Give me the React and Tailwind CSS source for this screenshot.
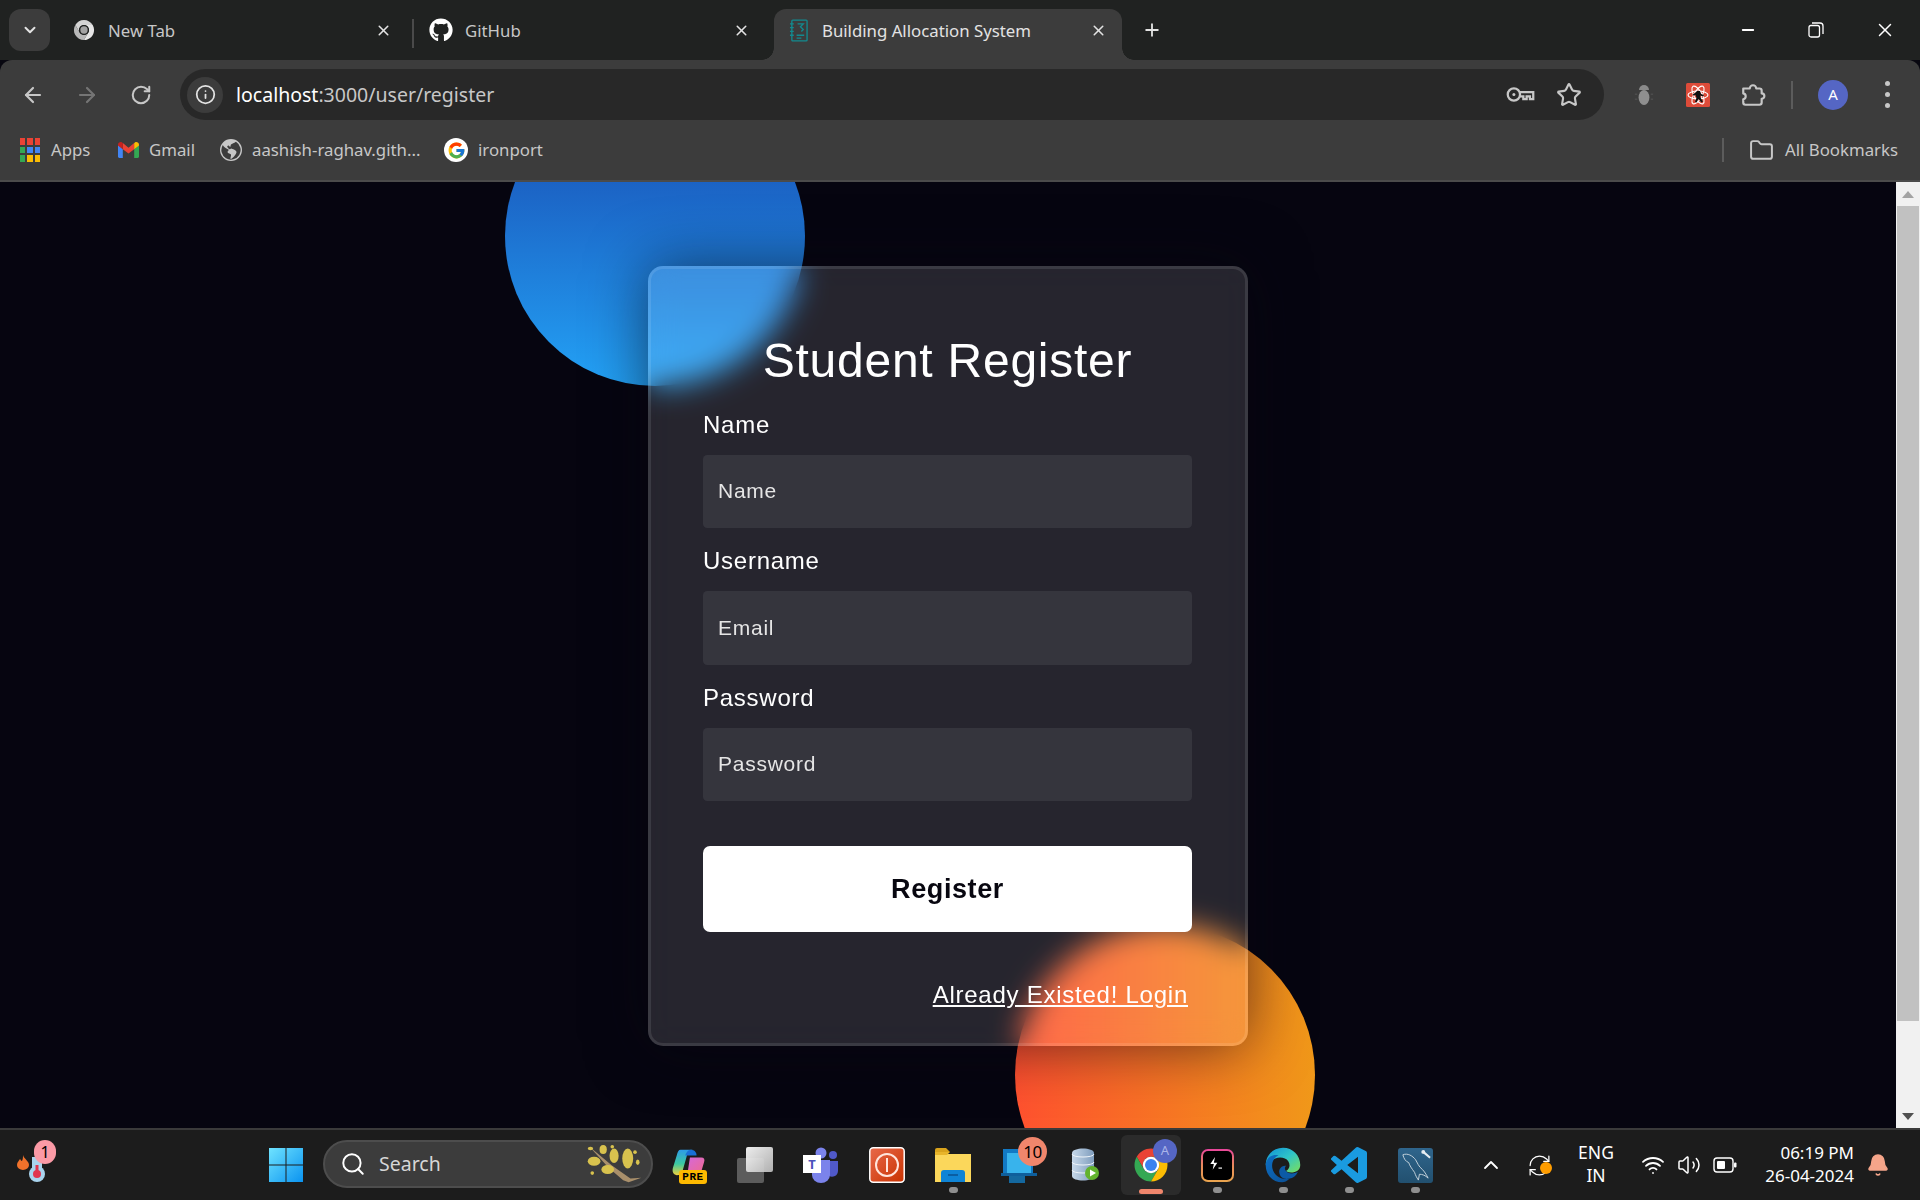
import { ArrowLeft, ArrowRight, RotateCw, Star, Folder, X, Plus, Minus, ChevronDown, ChevronUp, Search, Wifi, Volume2, Bell, Info, RefreshCw } from 'lucide-react';
import { FaGithub } from 'react-icons/fa';
import { FcGoogle } from 'react-icons/fc';
import { BsGlobeAmericas } from 'react-icons/bs';

const ui = { fontFamily: '"Noto Sans", sans-serif' };

// ---- small drawn icons ----
function ChromeLogo({ className, gray }) {
  return (
    <svg viewBox="0 0 48 48" className={className}>
      <path fill={gray ? '#d4d4d4' : '#ea4335'} d="M24 2C16 2 9 6.3 5 12.9L14.500 29.500A11 11 0 0 1 24 13H43C39.200 6.400 32.100 2 24 2Z" />
      <path fill={gray ? '#b8b8b8' : '#34a853'} d="M5 12.900C1 19.500 1 28.200 5 35C9 41.700 16 46 24 46L33.500 29.500A11 11 0 0 1 14.500 29.500Z" />
      <path fill={gray ? '#e6e6e6' : '#fbbc04'} d="M43 13H24A11 11 0 0 1 33.500 29.500L24 46C36.200 46 46 36.200 46 24C46 20 45 16.300 43 13Z" />
      <circle cx="24" cy="24" r="11" fill={gray ? '#202221' : '#fff'} />
      <circle cx="24" cy="24" r="8" fill={gray ? '#a3a3a3' : '#3b82f0'} />
    </svg>
  );
}

function Notebook() {
  return (
    <svg viewBox="0 0 20 24" className="w-[19px] h-[23px]" fill="none" stroke="#128a8f" strokeWidth="1.4">
      <rect x="3" y="1" width="16" height="22" rx="1" />
      <path d="M1 5h4M1 9h4M1 13h4M1 17h4" />
      <path d="M9 5h6l-3 3 3 3-2 2M8 17h8M8 20h5" />
    </svg>
  );
}

function KeyIcon() {
  return (
    <svg viewBox="0 0 30 18" className="w-[29px] h-[17px]" fill="none" stroke="#c7c7c7" strokeWidth="2.4">
      <circle cx="8" cy="9" r="6.5" />
      <circle cx="8" cy="9" r="1.6" fill="#c7c7c7" stroke="none" />
      <path d="M14.5 6.5H28.5V14H25V11H21.5V14H18V11H14.5" />
    </svg>
  );
}

function BugIcon() {
  return (
    <svg viewBox="0 0 24 28" className="w-[20px] h-[26px]">
      <path fill="#8a8a8a" d="M6 8a6 6 0 0 1 12 0Z" />
      <ellipse cx="12" cy="17" rx="6.5" ry="9" fill="#8f8f8f" />
      <path stroke="#5a5a5a" strokeWidth="1" d="M1 13h3M1 19h3M20 13h3M20 19h3" />
    </svg>
  );
}

function ReactExt() {
  return (
    <svg viewBox="0 0 24 24" className="w-[24px] h-[26px]">
      <rect width="24" height="24" rx="1.5" fill="#dd4b39" />
      <g fill="none" stroke="#fff" strokeWidth="1.1">
        <ellipse cx="12" cy="12" rx="10" ry="4" />
        <ellipse cx="12" cy="12" rx="10" ry="4" transform="rotate(60 12 12)" />
        <ellipse cx="12" cy="12" rx="10" ry="4" transform="rotate(120 12 12)" />
      </g>
      <path fill="#111" d="M11 8h3l1 3 3 1-1 1.5-3-1 1 3 2 3-1.5 1-3-3.5-2 3.5-1.5-.8 1.5-4-1-3-2 1-.8-1.2 3-2Z" />
    </svg>
  );
}

function ExtensionIcon() {
  return (
    <svg viewBox="0 0 24 24" className="w-[26px] h-[26px]" fill="none" stroke="#c7c7c7" strokeWidth="2" strokeLinejoin="round">
      <path d="M3 6h6a3 3 0 0 1 6 0h3a2 2 0 0 1 2 2v2.500a2.500 2.500 0 0 1 0 5V19a2 2 0 0 1-2 2H5a2 2 0 0 1-2-2v-3a2.800 2.800 0 0 0 0-5.500Z" />
    </svg>
  );
}

function AppsGrid() {
  const colors = ['#ea4335', '#ea4335', '#ea4335', '#34a853', '#4285f4', '#4285f4', '#34a853', '#fbbc04', '#fbbc04'];
  return (
    <div className="grid grid-cols-3 gap-[2px] w-[20px] h-[24px]">
      {colors.map((c, i) => (
        <span key={i} style={{ background: c }} />
      ))}
    </div>
  );
}

function GmailIcon() {
  return (
    <svg viewBox="0 0 24 18" className="w-[21px] h-[18px]">
      <path fill="#4285f4" d="M0 3v13.500A1.500 1.500 0 0 0 1.500 18H5.500V8Z" />
      <path fill="#34a853" d="M24 3v13.500a1.500 1.500 0 0 1-1.500 1.500H18.500V8Z" />
      <path fill="#ea4335" d="M5.500 8V1L12 6.500 18.500 1V8L12 13Z" />
      <path fill="#c5221f" d="M0 3C0 .6 2.800-.8 4.600.4L5.500 1V8L0 3.800Z" />
      <path fill="#fbbc04" d="M24 3c0-2.400-2.800-3.800-4.600-2.600L18.500 1V8L24 3.800Z" />
    </svg>
  );
}

function WinLogo() {
  return (
    <svg viewBox="0 0 36 36" className="w-[36px] h-[36px]">
      <defs>
        <linearGradient id="wl" x1="0" y1="0" x2="1" y2="1">
          <stop offset="0" stopColor="#6fe3ff" />
          <stop offset="1" stopColor="#0a93f0" />
        </linearGradient>
      </defs>
      <path fill="url(#wl)" d="M1 1h16.500v16.500H1ZM18.500 1H35v16.500H18.500ZM1 18.500h16.500V35H1ZM18.500 18.500H35V35H18.500Z" />
    </svg>
  );
}

function Blossom() {
  const buds = [[4, 5, 3, 2], [18, 6, 4, 5], [8, 19, 7, 5], [30, 13, 5, 8], [45, 16, 6, 11], [23, 28, 7, 5], [56, 20, 2, 3], [6, 32, 2, 2], [28, 3, 2, 2], [53, 9, 2, 2]];
  return (
    <svg viewBox="0 0 62 44" className="w-[60px] h-[40px]">
      <path d="M3 3L28 24L48 38L60 37L46 42L40 40L24 26Z" fill="#a98f6b" />
      {buds.map((b, i) => (
        <ellipse key={i} cx={b[0]} cy={b[1]} rx={b[2]} ry={b[3]} fill="#d8c24e" />
      ))}
    </svg>
  );
}

function Thermo() {
  return (
    <div className="relative w-[39px] h-[48px]">
      <svg viewBox="0 0 39 48" className="w-[39px] h-[48px]">
        <path d="M6 14c1 4 6 6 6 10a6 5 0 0 1-12 0c0-3 2-4 3-6 1 1 1 2 2 2 1-2 1-4 1-6Z" fill="#f0722b" />
        <rect x="15" y="16" width="10" height="20" fill="#a9d4ee" />
        <circle cx="20" cy="33" r="8" fill="#a9d4ee" />
        <rect x="18.500" y="24" width="3" height="10" fill="#e0354f" />
        <circle cx="20" cy="33" r="4" fill="#e0354f" />
      </svg>
      <span className="absolute right-0 top-[-1px] w-[22px] h-[24px] rounded-full bg-[#fb9aa6] flex items-center justify-center text-[16px] text-black">1</span>
    </div>
  );
}

function Copilot() {
  return (
    <div className="relative w-[36px] h-[36px]">
      <svg viewBox="0 0 36 36" className="w-[36px] h-[34px]">
        <defs>
          <linearGradient id="cp1" x1="0" y1="0" x2="0" y2="1">
            <stop offset="0" stopColor="#2d9be8" />
            <stop offset="0.55" stopColor="#3cc9a0" />
            <stop offset="1" stopColor="#f2d13c" />
          </linearGradient>
          <linearGradient id="cp2" x1="0" y1="0" x2="1" y2="1">
            <stop offset="0" stopColor="#d468e0" />
            <stop offset="1" stopColor="#f06a8a" />
          </linearGradient>
        </defs>
        <path fill="url(#cp1)" d="M9 3h13c-4 1-6 4-7 9l-4 14c-1 3-3 4-6 4-4-1-5-4-4-8L5 9c1-4 2-6 4-6Z" />
        <path fill="#1a6fd6" d="M20 3c4 0 6 3 6 6H14c1-3 3-6 6-6Z" />
        <path fill="url(#cp2)" d="M19 11h12c3 0 4 2 3 5l-3 10c-1 3-3 4-6 4H13c2-1 3-3 4-6Z" />
      </svg>
      <span className="absolute left-[8px] top-[23px] w-[28px] h-[14px] rounded-[3px] bg-[#fdb900] text-black text-[11px] font-bold leading-[14px] text-center tracking-[0.5px]" style={{ fontFamily: '"Liberation Mono", monospace' }}>PRE</span>
    </div>
  );
}

function Copies() {
  return (
    <div className="relative w-[36px] h-[36px]">
      <span className="absolute left-0 bottom-0 w-[27px] h-[25px] rounded-[2px] bg-[#5c5c5c]" />
      <span className="absolute right-0 top-0 w-[27px] h-[25px] rounded-[2px] bg-[linear-gradient(135deg,#fff,#bdbdbd)] opacity-[0.92]" />
    </div>
  );
}

function Teams() {
  return (
    <div className="relative w-[36px] h-[36px]">
      <svg viewBox="0 0 36 36" className="w-[36px] h-[36px]">
        <circle cx="30" cy="8" r="4" fill="#5059c9" />
        <path fill="#5059c9" d="M24 14h11v10a6 6 0 0 1-9 5Z" />
        <circle cx="18" cy="6" r="5.500" fill="#7b83eb" />
        <path fill="#7b83eb" d="M9 13h18v15a9 8 0 0 1-18 0Z" />
      </svg>
      <span className="absolute left-0 top-[8px] w-[18px] h-[18px] bg-white text-[#4b53bc] text-[13px] font-bold leading-[18px] text-center">T</span>
    </div>
  );
}

function PowerTile() {
  return (
    <svg viewBox="0 0 36 36" className="w-[36px] h-[36px]">
      <defs>
        <linearGradient id="pw" x1="0" y1="0" x2="1" y2="1">
          <stop offset="0" stopColor="#e8694a" />
          <stop offset="1" stopColor="#c93200" />
        </linearGradient>
      </defs>
      <rect x="0.800" y="0.800" width="34.400" height="34.400" rx="3.500" fill="url(#pw)" stroke="#fff" strokeWidth="1.500" />
      <circle cx="18" cy="18" r="11" fill="none" stroke="#ffe5dc" strokeWidth="2" />
      <rect x="17" y="11" width="2" height="14" fill="#ffe5dc" />
    </svg>
  );
}

function FolderTile() {
  return (
    <svg viewBox="0 0 36 34" className="w-[36px] h-[34px]">
      <path fill="#d9a31c" d="M0 2a2 2 0 0 1 2-2h9l4 4H0Z" />
      <path fill="#fbd75b" d="M0 6h36v28H0Z" />
      <path fill="#e8b52a" d="M0 4h15l-3 3H0Z" />
      <path fill="#0f84d6" d="M6 34V25a3 3 0 0 1 3-3h18a3 3 0 0 1 3 3v9Z" />
      <rect x="13" y="26" width="10" height="2" fill="#0a5ea3" />
    </svg>
  );
}

function StoreTile() {
  return (
    <div className="relative w-[36px] h-[36px]">
      <svg viewBox="0 0 36 36" className="w-[36px] h-[36px]">
        <path fill="#1279c4" d="M2 2h30v24H2Z" />
        <path fill="#38b3ec" d="M6 6h24v20H6Z" />
        <path fill="#0f5f9c" d="M0 26h36v3H0Z" />
        <path fill="#14689f" d="M8 29h16v7H8Z" />
      </svg>
      <span className="absolute left-[17px] top-[-10px] w-[29px] h-[29px] rounded-full bg-[#f0866c] text-black text-[17px] leading-[29px] text-center tracking-[-0.5px]">10</span>
    </div>
  );
}

function DbTile() {
  return (
    <svg viewBox="0 0 28 34" className="w-[28px] h-[34px]">
      <defs>
        <linearGradient id="db" x1="0" y1="0" x2="1" y2="0">
          <stop offset="0" stopColor="#c6d8ea" />
          <stop offset="1" stopColor="#7f9dbd" />
        </linearGradient>
      </defs>
      <path fill="url(#db)" d="M1 5c0-6 22-6 22 0v23c0 6-22 6-22 0Z" />
      <path fill="none" stroke="#eef4fa" strokeWidth="1" d="M1 6c0 4 22 4 22 0M1 14c0 4 22 4 22 0M1 22c0 4 22 4 22 0" />
      <circle cx="21" cy="25" r="7" fill="#62b32d" />
      <path fill="#fff" d="M19 21.500L25 25L19 28.500Z" />
    </svg>
  );
}

function TerminalTile() {
  return (
    <div className="w-[33px] h-[33px] rounded-[7px] p-[2px] bg-[linear-gradient(#e8459c,#e88a5c,#eaa54e)]">
      <div className="w-full h-full rounded-[5px] bg-black relative">
        <svg viewBox="0 0 12 12" className="absolute left-[5px] top-[6px] w-[14px] h-[14px]">
          <path fill="#fff" d="M6 0L2 6h3L4 11 8 5H5Z" />
          <rect x="9" y="9" width="3" height="1" fill="#fff" />
        </svg>
      </div>
    </div>
  );
}

function EdgeLogo() {
  return (
    <svg viewBox="0 0 48 48" className="w-[36px] h-[36px]">
      <defs>
        <linearGradient id="eg" x1="0" y1="0" x2="1" y2="1">
          <stop offset="0" stopColor="#0f8fd8" />
          <stop offset="0.5" stopColor="#2fc5c8" />
          <stop offset="1" stopColor="#7ce05a" />
        </linearGradient>
        <linearGradient id="eb" x1="0" y1="0" x2="1" y2="1">
          <stop offset="0" stopColor="#0d6fc4" />
          <stop offset="1" stopColor="#0b4f94" />
        </linearGradient>
      </defs>
      <path fill="url(#eg)" d="M24 1C37 1 47 11 47 24C47 31 41 34 35 34C30 34 28 32 28 32C33 29 34 24 31 19C27 13 15 12 8 19C5 22 2 27 1 24C1 11 11 1 24 1Z" />
      <path fill="url(#eb)" d="M1 24C1 14 10 9 18 11C12 14 8 21 10 29C12 38 22 45 33 42C29 46 26 47 23 47C10 47 1 37 1 24Z" />
      <path fill="#0c5aa6" d="M28 32C30 35 37 37 44 33C41 39 37 42 33 42C26 44 20 41 19 34C18 28 24 24 28 25C26 27 26 30 28 32Z" />
    </svg>
  );
}

function VsCode() {
  return (
    <svg viewBox="0 0 24 24" className="w-[36px] h-[36px]">
      <path fill="#1a9be0" d="M23.150 2.587L18.210.21a1.494 1.494 0 0 0-1.705.29l-9.460 8.630-4.120-3.128a.999.999 0 0 0-1.276.057L.327 7.261A1 1 0 0 0 .326 8.740L3.899 12 .326 15.260a1 1 0 0 0 .001 1.479L1.650 17.940a.999.999 0 0 0 1.276.057l4.120-3.128 9.460 8.630a1.492 1.492 0 0 0 1.704.29l4.942-2.377A1.500 1.500 0 0 0 24 20.060V3.939a1.500 1.500 0 0 0-.850-1.352zm-5.146 14.861L10.826 12l7.178-5.448v10.896z" />
    </svg>
  );
}

function MysqlTile() {
  return (
    <svg viewBox="0 0 36 36" className="w-[35px] h-[35px]">
      <defs>
        <linearGradient id="ms" x1="0" y1="0" x2="0" y2="1">
          <stop offset="0" stopColor="#2f658c" />
          <stop offset="1" stopColor="#22506f" />
        </linearGradient>
      </defs>
      <rect width="36" height="36" rx="3" fill="url(#ms)" />
      <path fill="none" stroke="#c5d3dc" strokeWidth="1" d="M5 7C10 5 15 8 18 12C20 15 21 19 25 22C27 24 29 27 31 31C28 28 25 27 22 27L21 33C19 30 18 28 17 25C14 21 12 18 11 15C8 14 6 11 5 7Z" />
      <path stroke="#e8eef2" strokeWidth="2.200" d="M26 4L33 10" />
      <circle cx="26" cy="4" r="2" fill="#e8eef2" />
    </svg>
  );
}

function BatteryIcon() {
  return (
    <svg viewBox="0 0 24 16" className="w-[24px] h-[16px]" fill="none">
      <rect x="1" y="1" width="19" height="14" rx="3" stroke="#fff" strokeWidth="1.400" />
      <rect x="4" y="4" width="8" height="8" rx="1" fill="#fff" />
      <rect x="21" y="5.500" width="2.500" height="5" rx="1" fill="#fff" />
    </svg>
  );
}

function RestoreIcon() {
  return (
    <svg viewBox="0 0 16 16" className="w-[16px] h-[16px]" fill="none" stroke="#fff" strokeWidth="1.300">
      <rect x="1" y="3.500" width="10.500" height="11.500" rx="2" />
      <path d="M4 1h8a3 3 0 0 1 3 3v8" />
    </svg>
  );
}

// ---- browser chrome ----
function Tab({ className, icon, title, active }) {
  return (
    <div className={`flex items-center h-full ${className}`}>
      {icon}
      <span className={`truncate text-[16.800px] pt-[1px] ${active ? 'text-[#e3e3e3]' : 'text-[#c7c7c7]'}`}>{title}</span>
      <X className="ml-auto w-[17px] h-[17px] text-[#e3e3e3]" strokeWidth={2.2} />
    </div>
  );
}

function TabStrip() {
  return (
    <div className="h-[60px] bg-[#202221] flex pt-[9px] pl-[9px]">
      <div className="w-[41px] h-[42px] rounded-[12px] bg-[#3c3c3c] flex items-center justify-center">
        <ChevronDown className="w-[18px] h-[18px] text-[#e3e3e3]" strokeWidth={2.6} />
      </div>
      <div className="w-[11px]" />
      <Tab
        className="w-[351px] pb-[9px] pl-[12px] pr-[20px]"
        icon={<ChromeLogo gray className="w-[22px] h-[22px] mr-[13px]" />}
        title="New Tab"
      />
      <div className="w-[2px] h-[29px] mt-[10px] bg-[#4a4a4a]" />
      <Tab
        className="w-[348px] pb-[9px] pl-[15px] pr-[12px]"
        icon={<FaGithub className="w-[24px] h-[24px] mr-[12px] text-white" />}
        title="GitHub"
      />
      <div className="w-[12px]" />
      <div className="relative w-[348px]">
        <span className="absolute left-[-12px] bottom-0 w-[12px] h-[12px] bg-[radial-gradient(circle_at_0_0,#202221_11.500px,#3c3c3c_12px)]" />
        <span className="absolute right-[-12px] bottom-0 w-[12px] h-[12px] bg-[radial-gradient(circle_at_100%_0,#202221_11.500px,#3c3c3c_12px)]" />
        <Tab
          active
          className="bg-[#3c3c3c] rounded-t-[12px] pb-[9px] pl-[15px] pr-[15px]"
          icon={<span className="mr-[14px] flex"><Notebook /></span>}
          title="Building Allocation System"
        />
      </div>
      <div className="w-[30px] h-[51px] ml-[15px] flex items-center justify-center pb-[9px]">
        <Plus className="w-[20px] h-[20px] text-[#e3e3e3]" strokeWidth={2.2} />
      </div>
      <div className="ml-auto flex h-[51px] pb-[9px] items-center">
        <div className="w-[68px] flex justify-center"><Minus className="w-[18px] h-[18px] text-white" strokeWidth={2.4} /></div>
        <div className="w-[68px] flex justify-center"><RestoreIcon /></div>
        <div className="w-[70px] flex justify-center"><X className="w-[22px] h-[22px] text-white" strokeWidth={1.6} /></div>
      </div>
    </div>
  );
}

function Toolbar() {
  return (
    <div className="h-[60px] bg-[#3c3c3c] rounded-t-[12px] flex items-start pt-[9px] pl-[6px] relative">
      <div className="w-[54px] h-[51px] flex items-center justify-center"><ArrowLeft className="w-[24px] h-[24px] text-[#c7c7c7]" strokeWidth={2.2} /></div>
      <div className="w-[54px] h-[51px] flex items-center justify-center"><ArrowRight className="w-[24px] h-[24px] text-[#757575]" strokeWidth={2.2} /></div>
      <div className="w-[54px] h-[51px] flex items-center justify-center"><RotateCw className="w-[22px] h-[22px] text-[#c7c7c7]" strokeWidth={2.2} /></div>
      <div className="ml-[12px] w-[1424px] h-[51px] rounded-full bg-[#282828] flex items-center pl-[7px] pr-[22px]">
        <div className="w-[36px] h-[36px] rounded-full bg-[#3c3c3c] flex items-center justify-center">
          <Info className="w-[21px] h-[21px] text-[#e3e3e3]" strokeWidth={2} />
        </div>
        <div className="ml-[13px] text-[19.500px] text-[#c7c7c7]">
          <span className="text-white">localhost</span>:3000/user/register
        </div>
        <div className="ml-auto mr-[21px]"><KeyIcon /></div>
        <Star className="w-[26px] h-[26px] text-[#c7c7c7]" strokeWidth={2} />
      </div>
      <div className="ml-[13px] w-[54px] h-[51px] flex items-center justify-center"><BugIcon /></div>
      <div className="w-[54px] h-[51px] flex items-center justify-center"><ReactExt /></div>
      <div className="w-[56px] h-[51px] flex items-center justify-center"><ExtensionIcon /></div>
      <div className="w-[22px] h-[51px] flex items-center justify-center"><span className="w-[2px] h-[28px] bg-[#5c5c5c]" /></div>
      <div className="w-[60px] h-[51px] flex items-center justify-center">
        <span className="w-[30px] h-[30px] rounded-full bg-[#5566c4] text-white text-[15px] flex items-center justify-center">A</span>
      </div>
      <div className="w-[48px] h-[51px] flex flex-col items-center justify-center gap-[6px]">
        <span className="w-[5px] h-[5px] rounded-full bg-[#c7c7c7]" />
        <span className="w-[5px] h-[5px] rounded-full bg-[#c7c7c7]" />
        <span className="w-[5px] h-[5px] rounded-full bg-[#c7c7c7]" />
      </div>
    </div>
  );
}

function Bookmarks() {
  return (
    <div className="h-[62px] bg-[#3c3c3c] border-b-2 border-[#4b4b4b] flex items-center pl-[20px] text-[16.800px] text-[#c7c7c7]">
      <div className="w-[98px] flex items-center gap-[11px]"><AppsGrid />Apps</div>
      <div className="w-[102px] flex items-center gap-[10px]"><GmailIcon />Gmail</div>
      <div className="w-[224px] flex items-center gap-[10px]"><BsGlobeAmericas className="w-[22px] h-[22px] text-[#c7c7c7]" />aashish-raghav.gith...</div>
      <div className="flex items-center gap-[10px]">
        <span className="w-[24px] h-[24px] rounded-full bg-white flex items-center justify-center"><FcGoogle className="w-[19px] h-[19px]" /></span>
        ironport
      </div>
      <div className="ml-auto flex items-center pr-[22px]">
        <span className="w-[2px] h-[24px] bg-[#5c5c5c] mr-[25px]" />
        <Folder className="w-[25px] h-[25px] text-[#c7c7c7] mr-[11px]" strokeWidth={1.9} />
        All Bookmarks
      </div>
    </div>
  );
}

// ---- the page itself ----
const labelClass = 'block text-[24px] leading-[36px] font-medium tracking-[0.75px] text-white';
const inputClass = 'block w-full rounded-[4.500px] bg-white/[0.07] px-[15px] text-[21px] font-light tracking-[0.75px] text-white placeholder:text-[#e5e5e5] outline-none';

function RegisterCard() {
  return (
    <form className="relative w-[600px] h-[780px] rounded-[15px] border-[3px] border-white/10 bg-white/[0.13] backdrop-blur-[15px] shadow-[0_0_60px_rgba(8,7,16,0.6)] pl-[52px] pr-[53px] pt-[56px]" style={{ fontFamily: '"Liberation Sans", Arial, sans-serif' }}>
      <h3 className="text-center text-[48px] leading-[72px] font-medium tracking-[0.75px] text-white">Student Register</h3>
      <label className={`${labelClass} mt-[10px] mb-[12px]`}>Name</label>
      <input className={`${inputClass} h-[73px] pb-[1px]`} placeholder="Name" />
      <label className={`${labelClass} mt-[15px] mb-[12px]`}>Username</label>
      <input className={`${inputClass} h-[74px]`} placeholder="Email" />
      <label className={`${labelClass} mt-[15px] mb-[12px]`}>Password</label>
      <input className={`${inputClass} h-[73px] pb-[1px]`} placeholder="Password" />
      <button type="button" className="block w-full h-[86px] mt-[45px] rounded-[7px] bg-white text-[27px] font-semibold tracking-[0.6px] text-[#080710]">Register</button>
      <div className="mt-[45px] pr-[4px] text-right text-[24px] leading-[36px] tracking-[0.75px] text-white">
        <a href="#" className="underline">Already Existed! Login</a>
      </div>
    </form>
  );
}

function ScrollBar() {
  return (
    <div className="w-[24px] bg-[#f1f1f1] flex flex-col items-center">
      <div className="h-[24px] flex items-center justify-center">
        <span className="border-x-[6px] border-x-transparent border-b-[7px] border-b-[#a3a3a3]" />
      </div>
      <div className="w-[22px] h-[815px] bg-[#c1c1c1]" />
      <div className="mt-auto h-[24px] flex items-center justify-center">
        <span className="border-x-[6px] border-x-transparent border-t-[7px] border-t-[#505050]" />
      </div>
    </div>
  );
}

// ---- windows taskbar ----
function Slot({ children, indicator }) {
  return (
    <div className="relative w-[66px] h-full flex items-center justify-center">
      {children}
      {indicator && <span className="absolute left-[29px] bottom-[7px] w-[9px] h-[6px] rounded-full bg-[#8f8f8f]" />}
    </div>
  );
}

function Taskbar() {
  return (
    <div className="h-[72px] bg-[#1c1c1c] border-t-2 border-[#3a3a3a] flex items-stretch pl-[17px] text-white" style={ui}>
      <div className="w-[39px] flex items-center"><Thermo /></div>
      <div className="ml-[212px] w-[36px] flex items-center"><WinLogo /></div>
      <div className="ml-[19px] w-[330px] h-[48px] mt-[10px] rounded-full bg-[#3c3c3c] border-2 border-[#4d4d4d] flex items-center pl-[15px] pr-[6px]">
        <Search className="w-[26px] h-[26px] text-white" strokeWidth={1.8} />
        <span className="ml-[13px] text-[19.500px] text-[#d6d6d6]">Search</span>
        <span className="ml-auto flex"><Blossom /></span>
      </div>
      <div className="ml-[3px] flex">
        <Slot><Copilot /></Slot>
        <Slot><Copies /></Slot>
        <Slot><Teams /></Slot>
        <Slot><PowerTile /></Slot>
        <Slot indicator><FolderTile /></Slot>
        <Slot><StoreTile /></Slot>
        <Slot><DbTile /></Slot>
        <Slot>
          <div className="relative w-[60px] h-[60px] rounded-[6px] bg-[#2b2b2b] flex items-center justify-center">
            <ChromeLogo className="w-[36px] h-[36px]" />
            <span className="absolute left-[32px] top-[4px] w-[24px] h-[24px] rounded-full bg-[#5566c4] text-[#aab4e8] text-[13px] flex items-center justify-center">A</span>
            <span className="absolute left-[18px] bottom-[1px] w-[24px] h-[5px] rounded-full bg-[#f0866c]" />
          </div>
        </Slot>
        <Slot indicator><TerminalTile /></Slot>
        <Slot indicator><EdgeLogo /></Slot>
        <Slot indicator><VsCode /></Slot>
        <Slot indicator><MysqlTile /></Slot>
      </div>
      <div className="ml-[27px] w-[32px] flex items-center justify-center"><ChevronUp className="w-[24px] h-[24px] text-white" strokeWidth={1.8} /></div>
      <div className="ml-[20px] w-[25px] flex items-center relative">
        <RefreshCw className="w-[25px] h-[25px] text-white" strokeWidth={1.2} />
        <span className="absolute right-0 top-[32px] w-[12px] h-[12px] rounded-full bg-[#ff9d00]" />
      </div>
      <div className="ml-[14px] w-[60px] flex flex-col items-center justify-center text-[17.500px] leading-[23px] pb-[2px]"><span>ENG</span><span>IN</span></div>
      <div className="ml-[15px] w-[24px] flex items-center"><Wifi className="w-[24px] h-[24px] text-white" strokeWidth={1.8} /></div>
      <div className="ml-[12px] w-[24px] flex items-center"><Volume2 className="w-[24px] h-[24px] text-white" strokeWidth={1.5} /></div>
      <div className="ml-[12px] w-[24px] flex items-center"><BatteryIcon /></div>
      <div className="w-[117px] flex flex-col items-end justify-center text-[17px] leading-[23px] pb-[3px]"><span>06:19 PM</span><span>26-04-2024</span></div>
      <div className="ml-[12px] w-[24px] flex items-center"><Bell className="w-[24px] h-[26px] text-[#f5a58a] fill-[#f5a58a]" strokeWidth={1.5} /></div>
    </div>
  );
}

export default function App() {
  return (
    <div className="w-[1920px] h-[1200px] flex flex-col overflow-hidden bg-[#080710]" style={ui}>
      <TabStrip />
      <Toolbar />
      <Bookmarks />
      <div className="flex-1 flex min-h-0">
        <main className="relative flex-1 overflow-hidden flex justify-center pt-[84px] bg-[#060510]">
          {/* decorative circles behind the glass card */}
          <div className="absolute left-[505px] top-[-96px] w-[300px] h-[300px] rounded-full bg-[linear-gradient(#1845ad,#23a2f6)]" />
          <div className="absolute left-[1015px] top-[743px] w-[300px] h-[300px] rounded-full bg-[linear-gradient(to_right,#ff512f,#f09819)]" />
          <RegisterCard />
        </main>
        <ScrollBar />
      </div>
      <Taskbar />
    </div>
  );
}
